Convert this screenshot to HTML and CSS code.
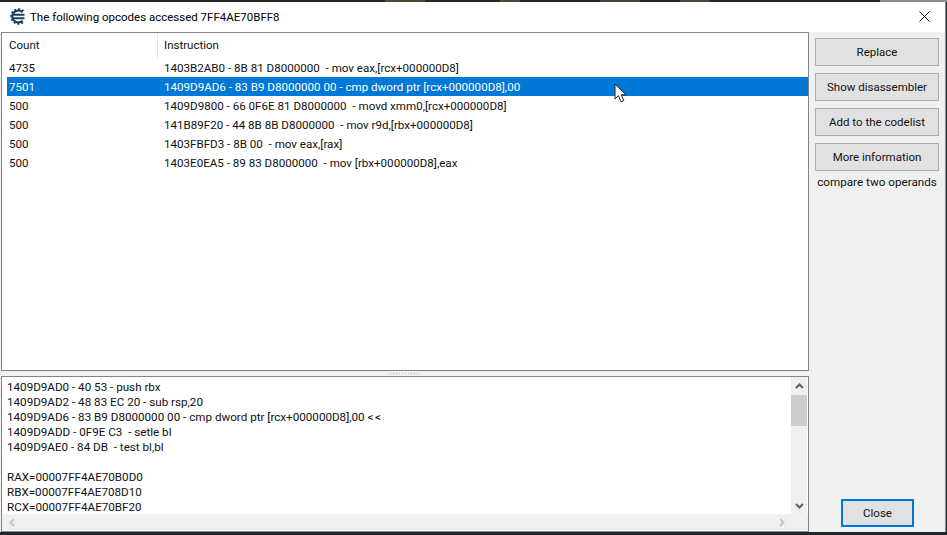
FILE: index.html
```html
<!DOCTYPE html>
<html lang="en">
<head>
<meta charset="utf-8">
<title>Opcodes</title>
<link rel="stylesheet" href="styles.css">
</head>
<body>
<div class="window">
  <div class="titlebar">
    <svg class="logo" width="17" height="17" viewBox="0 0 17 17">
      <path d="M13.500 4.200A6 6 0 1 0 13.500 12.800" fill="none" stroke="#14405f" stroke-width="2"/>
      <path d="M14.500 3.200A7.300 7.300 0 1 0 14.500 13.800" fill="none" stroke="#14405f" stroke-width="1.800" stroke-dasharray="2 1.800"/>
      <path d="M3 6.800H15.500M3 10.200H15.500" stroke="#14405f" stroke-width="2"/>
    </svg>
    <span class="title">The following opcodes accessed 7FF4AE70BFF8</span>
    <svg class="closex" width="11" height="11" viewBox="0 0 11 11"><path d="M.5.5l10 10M10.500.5l-10 10" stroke="#111" stroke-width="1" fill="none"/></svg>
  </div>
  <div class="body">
    <div class="left">
      <div class="list">
        <div class="head">
          <div class="col-count">Count</div>
          <div class="col-instr">Instruction</div>
        </div>
        <div class="row"><span class="count">4735</span><span class="instr">1403B2AB0 - 8B 81 D8000000&nbsp; - mov eax,[rcx+000000D8]</span></div>
        <div class="row selected"><span class="count">7501</span><span class="instr">1409D9AD6 - 83 B9 D8000000 00 - cmp dword ptr [rcx+000000D8],00</span></div>
        <div class="row"><span class="count">500</span><span class="instr">1409D9800 - 66 0F6E 81 D8000000&nbsp; - movd xmm0,[rcx+000000D8]</span></div>
        <div class="row"><span class="count">500</span><span class="instr">141B89F20 - 44 8B 8B D8000000&nbsp; - mov r9d,[rbx+000000D8]</span></div>
        <div class="row"><span class="count">500</span><span class="instr">1403FBFD3 - 8B 00&nbsp; - mov eax,[rax]</span></div>
        <div class="row"><span class="count">500</span><span class="instr">1403E0EA5 - 89 83 D8000000&nbsp; - mov [rbx+000000D8],eax</span></div>
        <svg class="cursor" width="14" height="21" viewBox="0 0 14 21"><path d="M1 1v15l3.500-3.200 2.500 6 2.800-1.200-2.500-5.800h4.700z" fill="#fff" stroke="#222" stroke-width="1"/></svg>
      </div>
      <div class="splitter"><span class="grip"></span></div>
      <div class="memo">
        <div class="memo-main">
          <div class="memo-text">
            <div>1409D9AD0 - 40 53 - push rbx</div>
            <div>1409D9AD2 - 48 83 EC 20 - sub rsp,20</div>
            <div>1409D9AD6 - 83 B9 D8000000 00 - cmp dword ptr [rcx+000000D8],00 <span class="marks">&lt;&lt;</span></div>
            <div>1409D9ADD - 0F9E C3&nbsp; - setle bl</div>
            <div>1409D9AE0 - 84 DB&nbsp; - test bl,bl</div>
            <div>&nbsp;</div>
            <div>RAX=00007FF4AE70B0D0</div>
            <div>RBX=00007FF4AE708D10</div>
            <div>RCX=00007FF4AE70BF20</div>
          </div>
          <div class="vbar">
            <svg class="arrow" width="9" height="6" viewBox="0 0 9 6"><path d="M1 5l3.500-3.500L8 5" fill="none" stroke="#606060" stroke-width="2"/></svg>
            <div class="vthumb"></div>
            <svg class="arrow arrow-down" width="9" height="6" viewBox="0 0 9 6"><path d="M1 1l3.500 3.500L8 1" fill="none" stroke="#606060" stroke-width="2"/></svg>
          </div>
        </div>
        <div class="hbar">
          <svg width="6" height="9" viewBox="0 0 6 9"><path d="M5 1L1.500 4.500 5 8" fill="none" stroke="#c4c4c4" stroke-width="2"/></svg>
          <svg width="6" height="9" viewBox="0 0 6 9"><path d="M1 1l3.500 3.500L1 8" fill="none" stroke="#c4c4c4" stroke-width="2"/></svg>
        </div>
      </div>
    </div>
    <div class="side">
      <button class="btn">Replace</button>
      <button class="btn">Show disassembler</button>
      <button class="btn">Add to the codelist</button>
      <button class="btn">More information</button>
      <div class="desc">compare two operands</div>
      <button class="btn btn-close">Close</button>
    </div>
  </div>
</div>
</body>
</html>
```
FILE: styles.css
```css
html, body {
  margin: 0;
  height: 100%;
  overflow: hidden;
  background: #23262b;
}
body {
  padding-top: 2px;
  box-sizing: border-box;
  font-family: Roboto, "Noto Sans", sans-serif;
  font-size: 11.5px;
  color: #111;
  background-image: linear-gradient(90deg, #24272c 0 385px, #4d4a37 385px 425px, #24272c 425px 500px, #4d4a37 500px 520px, #24272c 520px 600px, #47443a 600px 640px, #24272c 640px 680px, #4d4437 680px 710px, #24272c 710px 880px, #8c8c8c 880px);
  background-size: 100% 2px;
  background-repeat: no-repeat;
}
.window {
  width: 945px;
  height: 530px;
  background: #f0f0f0;
  display: flex;
  flex-direction: column;
  border-right: 1px solid #8a8f98;
}
.titlebar {
  height: 30px;
  flex: none;
  background: #fff;
  display: flex;
  align-items: center;
  padding-left: 9px;
  padding-right: 15px;
  padding-bottom: 1px;
  box-sizing: border-box;
}
.logo { flex: none; }
.title {
  margin-left: 4px;
  flex: 1;
  color: #000;
}
.closex { flex: none; }
.body {
  flex: 1;
  display: flex;
  min-height: 0;
}
.left {
  width: 808px;
  margin-left: 1px;
  display: flex;
  flex-direction: column;
}
.list {
  position: relative;
  height: 337px;
  flex: none;
  background: #fff;
  border: 1px solid #80848c;
  overflow: hidden;
}
.head {
  display: flex;
  height: 25px;
  align-items: center;
}
.col-count {
  width: 156px;
  height: 100%;
  box-sizing: border-box;
  padding-left: 7px;
  line-height: 24px;
  border-right: 1px solid #e4e5e7;
}
.col-instr { padding-left: 6px; margin-top: -1px; }
.row {
  display: flex;
  height: 19px;
  box-sizing: border-box;
  padding-top: 1px;
  line-height: 18px;
  margin-left: 5px;
  white-space: nowrap;
  font-size: 11.6px;
}
.row.selected {
  background: #0078d7;
  color: #fff;
}
.count {
  width: 157px;
  flex: none;
  padding-left: 2px;
  box-sizing: border-box;
}
.cursor {
  position: absolute;
  left: 612px;
  top: 50px;
}
.splitter {
  height: 5px;
  flex: none;
  display: flex;
  justify-content: center;
  align-items: center;
}
.grip {
  width: 30px;
  height: 1px;
  background: repeating-linear-gradient(90deg, #b5b5b5 0 1px, transparent 1px 3px);
}
.memo {
  flex: 1;
  min-height: 0;
  background: #fff;
  border: 1px solid #80848c;
  display: flex;
  flex-direction: column;
}
.memo-main {
  flex: 1;
  min-height: 0;
  display: flex;
  overflow: hidden;
}
.memo-text {
  flex: 1;
  padding: 3px 0 0 5px;
  line-height: 15px;
  white-space: nowrap;
  overflow: hidden;
  font-size: 11.65px;
}
.marks { letter-spacing: 1.5px; }
.vbar {
  width: 16px;
  margin-right: 1px;
  flex: none;
  background: #f0f0f0;
  display: flex;
  flex-direction: column;
  align-items: center;
}
.arrow { flex: none; margin-top: 6px; margin-bottom: 6px; }
.arrow-down { margin-top: auto; margin-bottom: 5px; }
.vthumb {
  width: 100%;
  height: 31px;
  background: #cdcdcd;
}
.hbar {
  height: 16px;
  flex: none;
  background: #f0f0f0;
  margin-bottom: 1px;
  display: flex;
  justify-content: space-between;
  align-items: center;
  padding: 0 23px 0 7px;
}
.side {
  flex: 1;
  padding: 6px 6px 5px 6px;
  display: flex;
  flex-direction: column;
  align-items: stretch;
  box-sizing: border-box;
  min-width: 0;
}
.btn {
  height: 28px;
  flex: none;
  margin: 0 0 7px;
  padding: 0;
  background: #e1e1e1;
  border: 1px solid #adadad;
  font: inherit;
  color: #111;
}
.desc {
  margin-top: -4px;
  line-height: 16px;
  text-align: center;
  white-space: nowrap;
  font-size: 11.7px;
}
.btn-close {
  margin: auto 25px 0 26px;
  border: 2px solid #0078d7;
}
```
